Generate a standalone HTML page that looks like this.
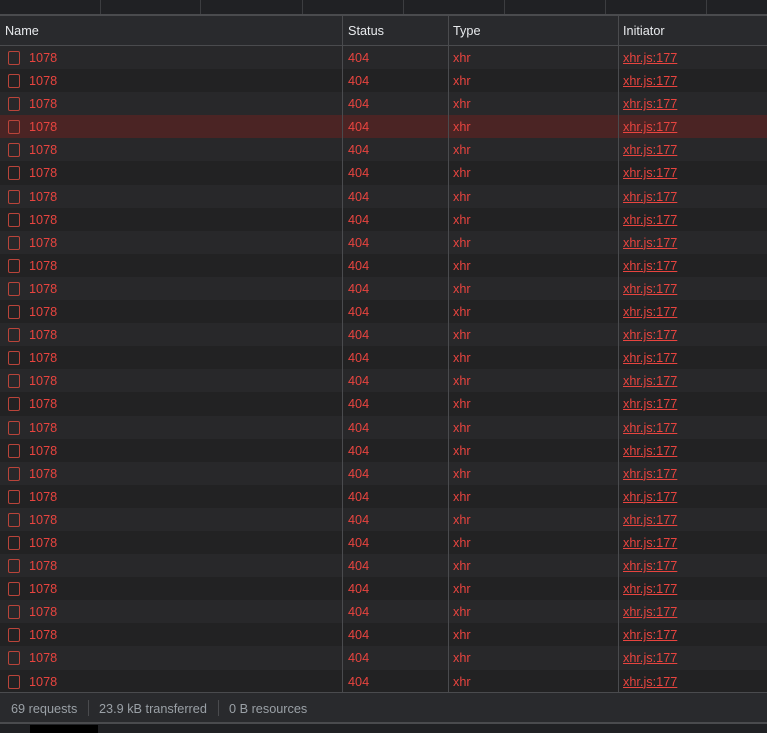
<!DOCTYPE html>
<html><head><meta charset="utf-8"><style>
*{margin:0;padding:0;box-sizing:border-box}
body{width:767px;height:733px;background:#202124;overflow:hidden;font-family:"Liberation Sans",sans-serif;font-size:12.7px;position:relative}
.top{position:absolute;left:0;top:0;width:767px;height:14px;background:#202124}
.top i{position:absolute;top:0;width:1px;height:14px;background:#3c3d40}
.hdr{position:absolute;left:0;top:14px;width:767px;height:32px;background:#292a2d;border-top:2px solid #4a4b4e;border-bottom:1px solid #4a4b4e;color:#e8eaed}
.hdr span{position:absolute;top:8px}
.rows{position:absolute;left:0;top:46px;width:767px}
.r{height:23.1px;position:relative;color:#e8443f}
.r:nth-child(odd){background:#28282a}
.r:nth-child(even){background:#222223}
.r.sel{background:#4b2424}
.r span{position:absolute;top:5px}
.ic{position:absolute;left:8px;top:5px;width:12px;height:14px;border:1.6px solid #b9443a;border-radius:2px}
.u{text-decoration:underline}
.vl{position:absolute;top:16px;width:1px;height:677px;background:#4a4b4e}
.foot{position:absolute;left:0;top:692px;width:767px;height:32px;background:#292a2d;border-top:1px solid #4a4b4e;border-bottom:2px solid #4a4b4e;color:#9aa0a6}
.foot span{position:absolute;top:9px}
.foot b{position:absolute;top:7px;width:1px;height:16px;background:#4a4b4e}
.blk{position:absolute;left:30px;top:725px;width:68px;height:8px;background:#000}
</style></head><body>
<div class="top"><i style="left:100px"></i><i style="left:200px"></i><i style="left:302px"></i><i style="left:403px"></i><i style="left:504px"></i><i style="left:605px"></i><i style="left:706px"></i></div>
<div class="hdr"><span style="left:5px">Name</span><span style="left:348px">Status</span><span style="left:453px">Type</span><span style="left:623px">Initiator</span></div>
<div class="rows" id="rows"></div>
<div class="vl" style="left:342px"></div><div class="vl" style="left:448px"></div><div class="vl" style="left:618px"></div>
<div class="foot"><span style="left:11px">69 requests</span><b style="left:88px"></b><span style="left:99px">23.9 kB transferred</span><b style="left:218px"></b><span style="left:229px">0 B resources</span></div>
<div class="blk"></div>
<script>
var h='';for(var i=0;i<28;i++){h+='<div class="r'+(i==3?' sel':'')+'"><div class="ic"></div><span style="left:29px">1078</span><span style="left:348px">404</span><span style="left:453px">xhr</span><span class="u" style="left:623px">xhr.js:177</span></div>';}
document.getElementById('rows').innerHTML=h;
</script>
</body></html>
